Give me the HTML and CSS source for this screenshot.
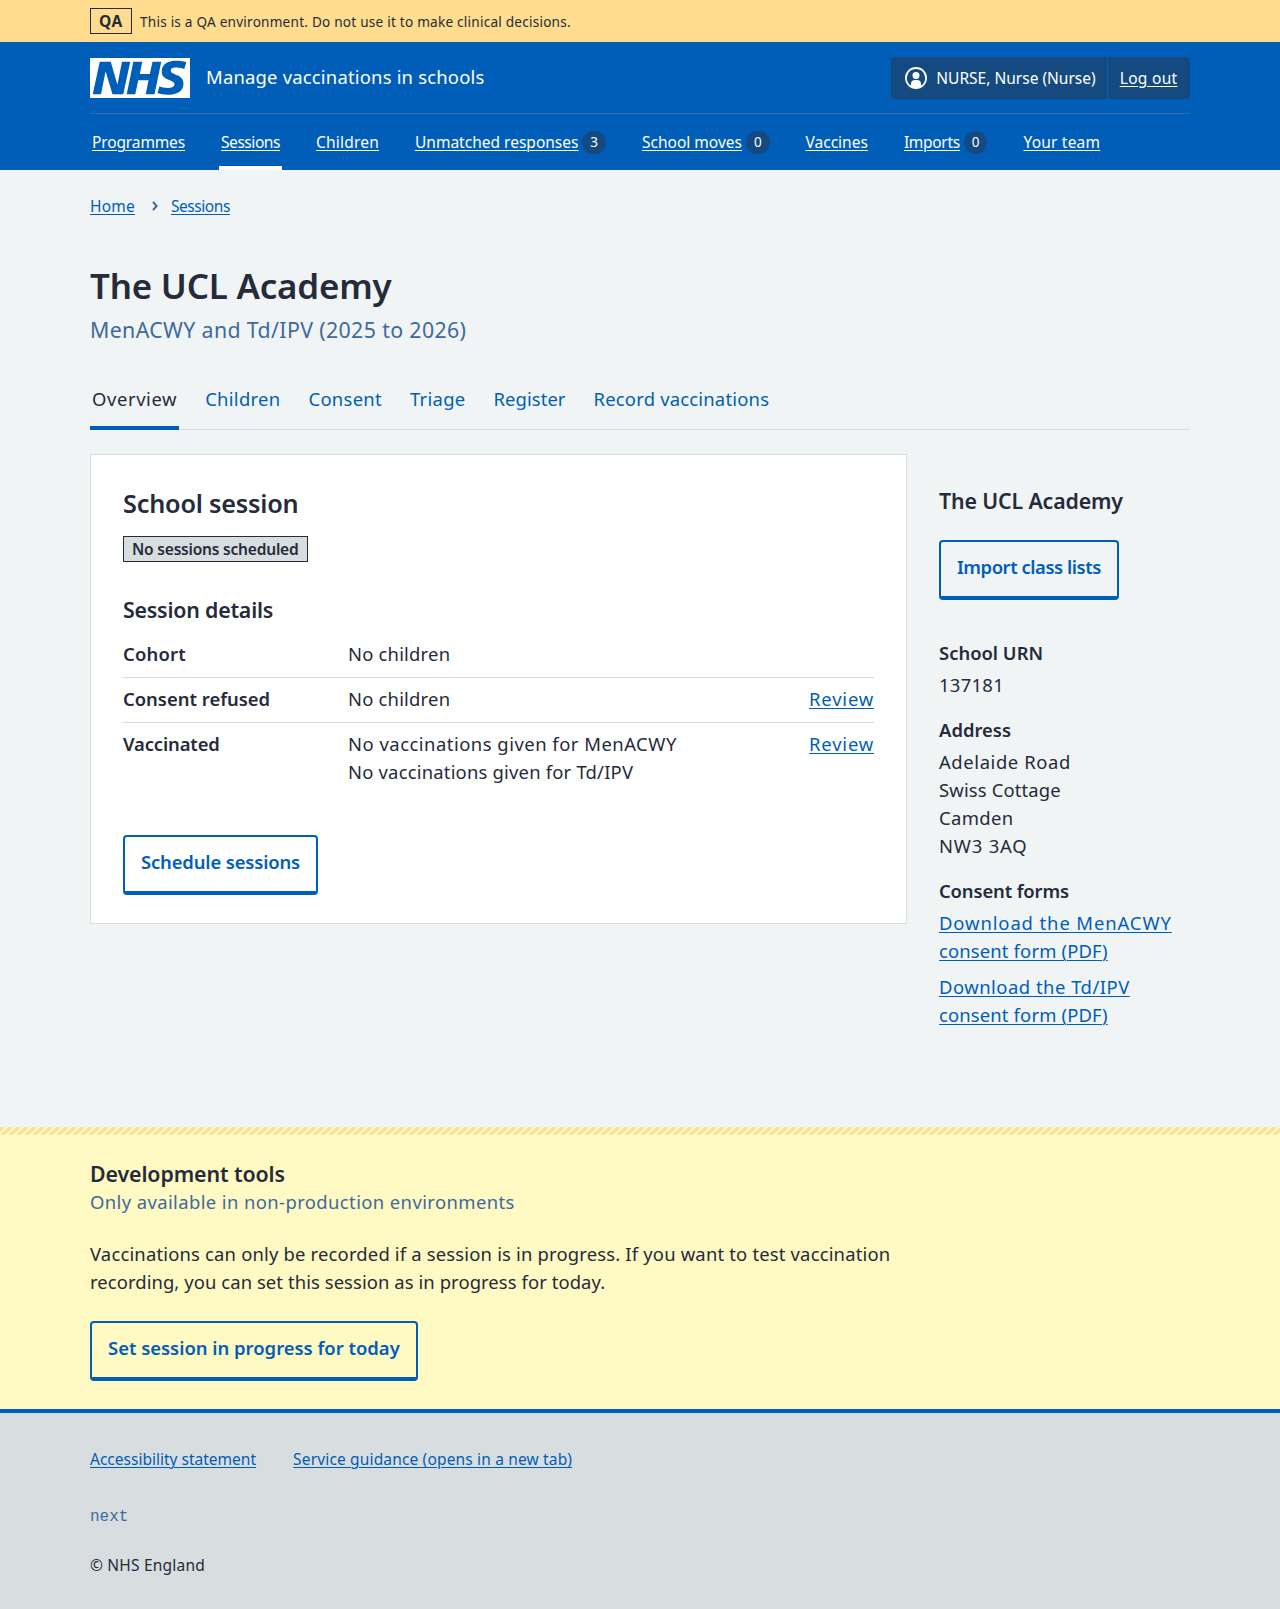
FILE: index.html
```html
<!DOCTYPE html>
<html lang="en">
<head>
<meta charset="utf-8">
<title>The UCL Academy – Manage vaccinations in schools</title>
<link rel="stylesheet" href="styles.css">
</head>
<body>
<div class="env">
  <div class="container env-inner">
    <strong class="tag tag-env ls-60">QA</strong>
    <span class="env-text">This is a QA environment. Do not use it to make clinical decisions.</span>
  </div>
</div>

<header class="header">
  <div class="container">
    <div class="header-top">
      <a class="service" href="#">
        <svg class="logo" viewBox="0 0 40 16" width="100" height="40" aria-label="NHS"><path fill="#fff" d="M0 0h40v16H0z"/><path fill="#005eb8" d="M3.9 1.5h4.4l2.6 9h.1l1.8-9h3.3l-2.8 13H9l-2.7-9h-.1l-1.8 9H1.1M17.3 1.5h3.6l-1 4.9h4L25 1.5h3.5l-2.7 13h-3.5l1.1-5.6h-4.1l-1.2 5.6h-3.4M37.7 4.4c-.7-.3-1.6-.6-2.9-.6-1.4 0-2.5.2-2.5 1.3 0 1.8 5.1 1.2 5.1 5.1 0 3.6-3.3 4.5-6.4 4.5-1.3 0-2.9-.3-4-.7l.8-2.7c.7.4 2.1.7 3.2.7s2.8-.2 2.8-1.5c0-2.1-5.1-1.3-5.1-5 0-3.4 2.9-4.4 5.8-4.4 1.6 0 3.1.2 4 .6"/></svg>
        <span class="service-name">Manage vaccinations in schools</span>
      </a>
      <div class="account">
        <span class="account-item account-user">
          <svg viewBox="0 0 24 24" width="24" height="24" aria-hidden="true"><path fill="#fff" d="M12 1a11 11 0 1 1 0 22 11 11 0 0 1 0-22Zm0 2a9 9 0 0 0-5 16.5V18a4 4 0 0 1 4-4h2a4 4 0 0 1 4 4v1.5A9 9 0 0 0 12 3Zm0 3a3.5 3.5 0 1 1-3.500 3.500A3.400 3.400 0 0 1 12 6Z"/></svg>
          <span>NURSE, Nurse (Nurse)</span>
        </span>
        <span class="account-item account-out"><a class="ls-30" href="#">Log out</a></span>
      </div>
    </div>
    <nav class="nav">
      <div class="nav-item"><a class="ls-m15" href="#">Programmes</a></div>
      <div class="nav-item current"><a class="ls-m45" href="#">Sessions</a></div>
      <div class="nav-item"><a class="ls-20" href="#">Children</a></div>
      <div class="nav-item"><a href="#">Unmatched responses</a><span class="count">3</span></div>
      <div class="nav-item"><a href="#">School moves</a><span class="count">0</span></div>
      <div class="nav-item"><a href="#">Vaccines</a></div>
      <div class="nav-item"><a class="ls-m30" href="#">Imports</a><span class="count">0</span></div>
      <div class="nav-item"><a class="ls-20" href="#">Your team</a></div>
    </nav>
  </div>
</header>

<div class="container page">
  <nav class="breadcrumb">
    <a class="ls-20" href="#">Home</a>
    <svg viewBox="0 0 8 10" width="8" height="10" aria-hidden="true"><path d="M2 .8 5.600 5 2 9.200" fill="none" stroke="#3d6a9e" stroke-width="2"/></svg>
    <a class="ls-m45" href="#">Sessions</a>
  </nav>
  <h1>The UCL Academy</h1>
  <p class="caption">MenACWY and Td/IPV (2025 to 2026)</p>

  <nav class="tabs">
    <a class="active ls-60" href="#">Overview</a>
    <a class="ls-30" href="#">Children</a>
    <a class="ls-30" href="#">Consent</a>
    <a class="ls-30" href="#">Triage</a>
    <a class="ls-10" href="#">Register</a>
    <a class="ls-20" href="#">Record vaccinations</a>
  </nav>

  <div class="columns">
    <main class="card">
      <h2>School session</h2>
      <strong class="tag tag-status ls-m20">No sessions scheduled</strong>
      <h3 class="ls-m20">Session details</h3>
      <dl class="summary">
        <div class="row"><dt class="ls-20">Cohort</dt><dd class="ls-20">No children</dd></div>
        <div class="row"><dt>Consent refused</dt><dd class="ls-20">No children</dd><dd class="action"><a class="ls-80" href="#">Review</a></dd></div>
        <div class="row"><dt class="ls-m15">Vaccinated</dt><dd><span class="ls-50">No vaccinations given for MenACWY</span><br><span class="ls-20">No vaccinations given for Td/IPV</span></dd><dd class="action"><a class="ls-80" href="#">Review</a></dd></div>
      </dl>
      <a class="button ls-m15" href="#">Schedule sessions</a>
    </main>

    <aside class="side">
      <h3 class="ls-m15">The UCL Academy</h3>
      <a class="button ls-m45" href="#">Import class lists</a>
      <dl class="details">
        <dt>School URN</dt>
        <dd class="ls-30">137181</dd>
        <dt>Address</dt>
        <dd><span class="ls-60">Adelaide Road</span><br><span class="ls-15">Swiss Cottage</span><br><span class="ls-40">Camden</span><br><span class="ls-80">NW3 3AQ</span></dd>
        <dt class="ls-m15">Consent forms</dt>
        <dd><a href="#"><span class="ls-90">Download the MenACWY</span><br><span class="ls-15">consent form (PDF)</span></a></dd>
        <dd class="next-form"><a href="#"><span class="ls-50">Download the Td/IPV</span><br><span class="ls-15">consent form (PDF)</span></a></dd>
      </dl>
    </aside>
  </div>
</div>

<section class="dev">
  <div class="container">
    <h3 class="ls-m10">Development tools</h3>
    <p class="dev-caption">Only available in non-production environments</p>
    <p class="dev-text">Vaccinations can only be recorded if a session is in progress. If you want to test vaccination <span class="ls-10">recording, you can set this session as in progress for today.</span></p>
    <a class="button" href="#">Set session in progress for today</a>
  </div>
</section>

<footer class="footer">
  <div class="container">
    <div class="footer-links">
      <a href="#">Accessibility statement</a>
      <a class="ls-15" href="#">Service guidance (opens in a new tab)</a>
    </div>
    <p class="version">next</p>
    <p class="ls-20">© NHS England</p>
  </div>
</footer>
</body>
</html>
```
FILE: styles.css
```css
* { box-sizing: border-box; }

body {
  margin: 0;
  background: #f0f4f5;
  color: #252b3a;
  font: 18.43px/28px "Noto Sans", sans-serif;
}

h1, h2, h3, p, dl, dd { margin: 0; }
h1, h2, h3, dt { font-weight: 650; }
a { color: #005eb8; text-decoration-thickness: 1px; text-underline-offset: 2px; }

.container { width: 1100px; margin: 0 auto; }

/* Letter-spacing steps, in hundredths of a pixel */
.ls-m45 { letter-spacing: -.45px; }
.ls-m30 { letter-spacing: -.3px; }
.ls-m20 { letter-spacing: -.2px; }
.ls-m15 { letter-spacing: -.14px; }
.ls-m10 { letter-spacing: -.1px; }
.ls-10 { letter-spacing: .08px; }
.ls-15 { letter-spacing: .15px; }
.ls-20 { letter-spacing: .2px; }
.ls-30 { letter-spacing: .3px; }
.ls-40 { letter-spacing: .38px; }
.ls-50 { letter-spacing: .5px; }
.ls-60 { letter-spacing: .6px; }
.ls-80 { letter-spacing: .8px; }
.ls-90 { letter-spacing: .9px; }

.tag {
  display: block;
  width: fit-content;
  height: 26px;
  padding: 0 8px;
  border: 1px solid #252b3a;
  font-size: 15.52px;
  line-height: 24px;
  font-weight: 600;
}

/* Environment banner */
.env { background: #ffdc8e; }
.env-inner { display: flex; align-items: center; gap: 8px; height: 42px; }
.tag-env { font-weight: 700; width: 42px; text-align: center; }
.env-text { font-size: 13.58px; line-height: 20px; letter-spacing: .23px; padding-top: 1px; }

/* Header */
.header { background: #005eb8; color: #fff; font-size: 15.52px; line-height: 24px; }
.header a { color: #fff; }
.header-top {
  display: flex;
  justify-content: space-between;
  align-items: center;
  height: 72px;
  border-bottom: 1px solid #3d6a9e;
}
.service { display: flex; align-items: center; gap: 16px; text-decoration: none; }
.service-name { font-size: 18.43px; letter-spacing: .2px; padding-bottom: 1px; }
.account { display: flex; height: 42px; border-radius: 4px; background: #154a80; overflow: hidden; }
.account-item { display: flex; align-items: center; }
.account-user { gap: 8px; padding: 0 11px 0 13px; border-right: 1px solid #005eb8; }
.account-out { padding: 0 12.5px 0 12px; }
.nav { display: flex; gap: 32px; height: 56px; }
.nav-item { display: flex; align-items: center; gap: 4px; padding: 4px 2px 0; border-bottom: 4px solid transparent; }
.nav-item.current { border-bottom-color: #fff; }
.count {
  width: 23.5px;
  height: 23px;
  border-radius: 12px;
  background: #154a80;
  font-size: 13.5px;
  line-height: 23px;
  text-align: center;
}

/* Page heading */
.page { padding-bottom: 98px; }
.breadcrumb { display: flex; align-items: center; padding-top: 24px; font-size: 15.52px; line-height: 24px; }
.breadcrumb svg { margin: 0 12px 0 16px; }
h1 { margin-top: 46px; font-size: 34.92px; line-height: 44px; letter-spacing: -.2px; }
.caption { margin-top: 6px; font-size: 21.34px; line-height: 32px; letter-spacing: .36px; color: #3d6a9e; }

.tabs { display: flex; gap: 24px; height: 45px; margin-top: 39px; box-shadow: inset 0 -1px #d8dde0; }
.tabs a { padding: 0 2px; text-decoration: none; }
.tabs .active { color: #252b3a; border-bottom: 4px solid #005eb8; }

/* Main columns */
.columns { display: flex; align-items: flex-start; gap: 32px; margin-top: 24px; }
.card { width: 817px; height: 470px; padding: 32px 32px 27px; border: 1px solid #d8dde0; background: #fff; }
h2 { font-size: 25.22px; line-height: 32px; letter-spacing: -.2px; }
h3 { font-size: 21.34px; line-height: 28px; }
.tag-status { margin-top: 17px; background: #d8dde0; }
.card h3 { margin-top: 34px; }
.summary { margin-top: 9px; }
.row { display: flex; padding: 7px 0 9px; border-bottom: 1px solid #d8dde0; }
.row:last-child { border-bottom: 0; }
.row dt { width: 225px; }
.row .action { margin-left: auto; }

.button {
  display: block;
  width: fit-content;
  height: 60px;
  padding: 11px 16px 15px;
  border: 2px solid #005eb8;
  border-bottom-width: 4px;
  border-radius: 4px;
  font-weight: 600;
  text-decoration: none;
}
.card .button { margin-top: 40px; }

.side { width: 251px; padding-top: 33px; }
.side .button { margin-top: 25px; }
.details { margin-top: 39px; }
.details dt { margin-bottom: 4px; }
.details dd + dt { margin-top: 17px; }
.details .next-form { margin-top: 8px; }

/* Development tools */
.dev { background: #fff9c4; padding-bottom: 28px; }
.dev::before {
  content: "";
  display: block;
  height: 8px;
  margin-bottom: 25px;
  background: linear-gradient(135deg, #ffdc8e 25%, transparent 25% 50%, #ffdc8e 50% 75%, transparent 75%) 0 0 / 8px 8px;
}
.dev-caption { color: #3d6a9e; letter-spacing: .4px; }
.dev-text { width: 817px; margin-top: 24px; letter-spacing: .18px; }
.dev .button { margin-top: 25px; }

/* Footer */
.footer { height: 200px; padding-top: 34px; border-top: 4px solid #005eb8; background: #d8dde0; font-size: 15.52px; line-height: 24px; }
.footer-links { display: flex; gap: 37px; }
.version { margin: 34px 0 24px; color: #3d6a9e; font-family: "Liberation Mono", monospace; font-size: 16px; }
```
